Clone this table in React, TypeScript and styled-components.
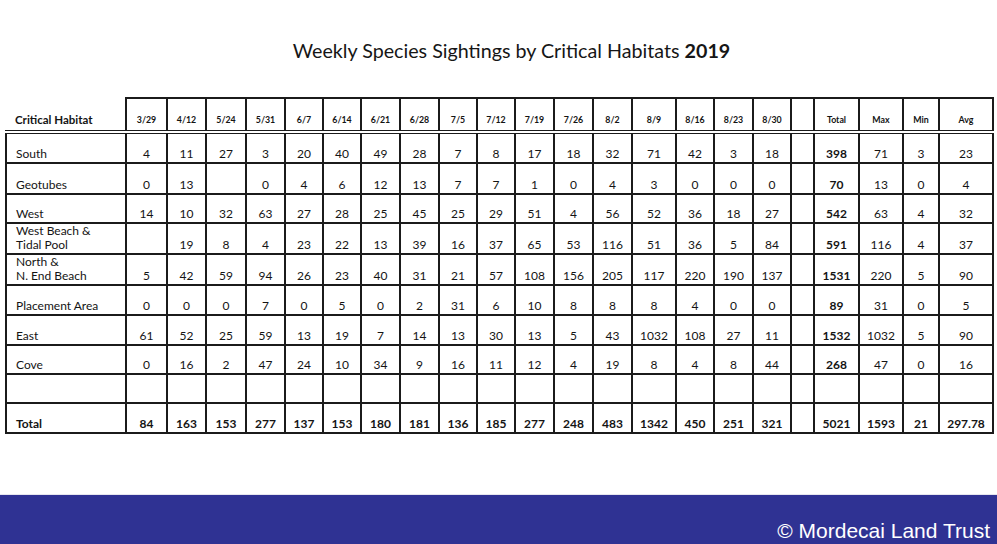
import React from 'react';
import styled, { createGlobalStyle } from 'styled-components';

const Global = createGlobalStyle`
  html, body { margin: 0; padding: 0; background: #fff; }
  body {
    width: 997px; height: 544px; overflow: hidden;
    font-family: Lato, "Noto Sans", sans-serif; color: #141414;
  }
`;

const Page = styled.div`
  width: 997px;
  height: 544px;
  display: flex;
  flex-direction: column;
  background: #fff;
`;

const Title = styled.h1`
  margin: 0;
  box-sizing: border-box;
  height: 97px;
  padding: 39px 0 0 26px;
  text-align: center;
  font-size: 19.7px;
  font-weight: 400;
  line-height: 24px;
  color: #161616;
  b { font-weight: 700; }
`;

const TableWrap = styled.div`
  padding-left: 5px;
`;

const Table = styled.table`
  border-collapse: collapse;
  table-layout: fixed;
  width: 987px;
`;

const HeadRow = styled.tr`
  height: 34px;
`;

const HabitatHead = styled.th`
  border: 2px solid #1b1b1b;
  border-top: none;
  border-left: none;
  border-bottom: 4px double #1b1b1b;
  padding: 0 0 3px 9px;
  text-align: left;
  vertical-align: bottom;
  font-size: 11.5px;
  font-weight: 700;
  line-height: 14px;
  white-space: nowrap;
`;

const DateHead = styled.th`
  border: 2px solid #1b1b1b;
  border-bottom: 4px double #1b1b1b;
  padding: 0 0 4px;
  text-align: center;
  vertical-align: bottom;
  font-size: 8.8px;
  font-weight: 700;
  line-height: 12px;
  white-space: nowrap;
`;

const BodyRow = styled.tr<{ $h: number; $total?: boolean }>`
  height: ${(p) => p.$h}px;
  font-weight: ${(p) => (p.$total ? 700 : 400)};
`;

const NameCell = styled.td`
  border: 2px solid #1b1b1b;
  padding: 0 0 1px 9px;
  text-align: left;
  vertical-align: bottom;
  font-size: 12px;
  line-height: 14px;
  white-space: nowrap;
  overflow: hidden;
`;

const NumCell = styled.td<{ $strong?: boolean }>`
  border: 2px solid #1b1b1b;
  padding: 0 0 1px;
  text-align: center;
  vertical-align: bottom;
  font-size: 12px;
  line-height: 14px;
  font-weight: ${(p) => (p.$strong ? 700 : 'inherit')};
  white-space: nowrap;
  overflow: hidden;
`;

const Spacer = styled.div`
  flex: 1;
`;

const Footer = styled.footer`
  height: 50px;
  box-sizing: border-box;
  border-top: 1px solid #e6e6ee;
  background: #2f3293;
  display: flex;
  justify-content: flex-end;
  align-items: flex-end;
  padding: 0 7px 1px 0;
`;

const Copyright = styled.span`
  font-family: "Liberation Sans", Arial, sans-serif;
  font-size: 21px;
  line-height: 24px;
  color: #fff;
`;

const widths = [120, 41, 39, 40, 39, 38, 38, 39, 39, 38, 38, 39, 39, 39, 44, 38, 39, 38, 23, 45, 44, 36, 54];

const dates = ['3/29', '4/12', '5/24', '5/31', '6/7', '6/14', '6/21', '6/28', '7/5', '7/12', '7/19', '7/26', '8/2', '8/9', '8/16', '8/23', '8/30'];
const summary = ['Total', 'Max', 'Min', 'Avg'];

type Row = { name: React.ReactNode; h: number; weeks: string[]; stats: string[]; total?: boolean };

const s = (v: string) => v.split(' ').map((x) => (x === '-' ? '' : x));

const rows: Row[] = [
  { name: 'South', h: 31, weeks: s('4 11 27 3 20 40 49 28 7 8 17 18 32 71 42 3 18'), stats: s('398 71 3 23') },
  { name: 'Geotubes', h: 31, weeks: s('0 13 - 0 4 6 12 13 7 7 1 0 4 3 0 0 0'), stats: s('70 13 0 4') },
  { name: 'West', h: 29, weeks: s('14 10 32 63 27 28 25 45 25 29 51 4 56 52 36 18 27'), stats: s('542 63 4 32') },
  {
    name: (<>West Beach &amp;<br />Tidal Pool</>),
    h: 31,
    weeks: s('- 19 8 4 23 22 13 39 16 37 65 53 116 51 36 5 84'),
    stats: s('591 116 4 37'),
  },
  {
    name: (<>North &amp;<br />N. End Beach</>),
    h: 30,
    weeks: s('5 42 59 94 26 23 40 31 21 57 108 156 205 117 220 190 137'),
    stats: s('1531 220 5 90'),
  },
  { name: 'Placement Area', h: 30, weeks: s('0 0 0 7 0 5 0 2 31 6 10 8 8 8 4 0 0'), stats: s('89 31 0 5') },
  { name: 'East', h: 30, weeks: s('61 52 25 59 13 19 7 14 13 30 13 5 43 1032 108 27 11'), stats: s('1532 1032 5 90') },
  { name: 'Cove', h: 29, weeks: s('0 16 2 47 24 10 34 9 16 11 12 4 19 8 4 8 44'), stats: s('268 47 0 16') },
  { name: '', h: 29, weeks: Array(17).fill(''), stats: Array(4).fill('') },
  {
    name: 'Total',
    h: 30,
    total: true,
    weeks: s('84 163 153 277 137 153 180 181 136 185 277 248 483 1342 450 251 321'),
    stats: s('5021 1593 21 297.78'),
  },
];

export default function App() {
  return (
    <Page>
      <Global />
      <Title>
        Weekly Species Sightings by Critical Habitats <b>2019</b>
      </Title>
      <TableWrap>
        <Table>
          <colgroup>
            {widths.map((w, i) => (
              <col key={i} style={{ width: w }} />
            ))}
          </colgroup>
          <thead>
            <HeadRow>
              <HabitatHead>Critical Habitat</HabitatHead>
              {dates.map((d) => (
                <DateHead key={d}>{d}</DateHead>
              ))}
              <DateHead />
              {summary.map((d) => (
                <DateHead key={d}>{d}</DateHead>
              ))}
            </HeadRow>
          </thead>
          <tbody>
            {rows.map((r, i) => (
              <BodyRow key={i} $h={r.h} $total={r.total}>
                <NameCell>{r.name}</NameCell>
                {r.weeks.map((v, j) => (
                  <NumCell key={j}>{v}</NumCell>
                ))}
                <NumCell />
                {r.stats.map((v, j) => (
                  <NumCell key={j} $strong={j === 0}>
                    {v}
                  </NumCell>
                ))}
              </BodyRow>
            ))}
          </tbody>
        </Table>
      </TableWrap>
      <Spacer />
      <Footer>
        <Copyright>© Mordecai Land Trust</Copyright>
      </Footer>
    </Page>
  );
}
